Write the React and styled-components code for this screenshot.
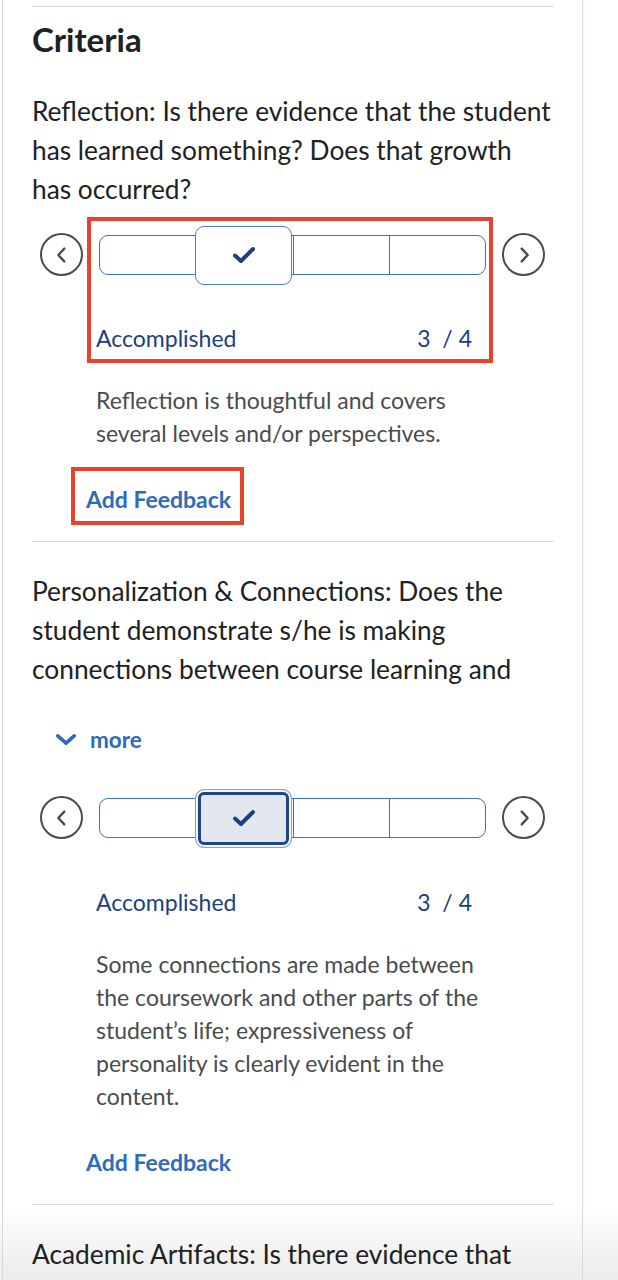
import React from "react";
import styled, { createGlobalStyle } from "styled-components";

const Global = createGlobalStyle`
  html, body { margin: 0; padding: 0; background: #ffffff; }
  body { font-family: Lato, "Noto Sans", sans-serif; color: #202122; }
  * { box-sizing: border-box; }
`;

const Page = styled.div`
  display: flex;
  height: 1280px;
  overflow: hidden;
  padding-left: 2px;
  background: linear-gradient(to bottom, #ffffff 0, #ffffff calc(100% - 74px), #ebebeb 100%);
`;

const Panel = styled.div`
  width: 581px;
  border-left: 1px solid #d3d9e3;
  border-right: 1px solid #d3d9e3;
  padding: 6px 28px 0 29px;
`;

const Divider = styled.div`
  border-top: 1px solid #d6dadf;
`;

const Heading = styled.h2`
  margin: 13px 0 0;
  font-size: 33px;
  line-height: 38px;
  font-weight: 700;
  color: #202122;
`;

const Criterion = styled.section`
  padding: ${(p) => (p.$first ? "34px" : "30px")} 0 ${(p) => (p.$last ? "0" : "27px")};
  border-bottom: ${(p) => (p.$last ? "none" : "1px solid #d6dadf")};
`;

const Question = styled.div`
  position: relative;
  font-size: 26.3px;
  line-height: 39px;
  color: #202122;
  max-height: ${(p) => (p.$clamped ? "131px" : "none")};
  overflow: hidden;
`;

const Fade = styled.div`
  position: absolute;
  left: 0;
  right: 0;
  bottom: 0;
  height: 16px;
  background: linear-gradient(to bottom, rgba(255,255,255,0.75), #ffffff 70%);
`;

const MoreButton = styled.button`
  display: flex;
  align-items: center;
  gap: 13px;
  height: 30px;
  margin: 22px 0 0 23px;
  padding: 0;
  border: none;
  background: none;
  font-family: inherit;
  font-size: 22.5px;
  line-height: 30px;
  font-weight: 700;
  color: #2f6bbd;
  cursor: pointer;
`;

const Wrap = styled.div`
  position: relative;
  margin-top: ${(p) => p.$mt || 0}px;
  margin-left: ${(p) => p.$ml || 0}px;
  width: fit-content;
`;

const SliderRow = styled.div`
  display: flex;
  align-items: center;
  gap: 16px;
  padding-left: 8px;
`;

const RoundButton = styled.button`
  width: 43px;
  height: 43px;
  flex: none;
  border: 2.5px solid #494c4e;
  border-radius: 50%;
  background: #fff;
  display: flex;
  align-items: center;
  justify-content: center;
  padding: 0;
  color: #494c4e;
`;

const Track = styled.div`
  position: relative;
  width: 387px;
  flex: none;
  height: 40px;
  display: grid;
  grid-template-columns: repeat(4, 1fr);
  border: 1px solid #3a72c4;
  border-radius: 9px;
  background: #fff;
`;

const Segment = styled.div`
  border-left: ${(p) => (p.$index === 0 ? "none" : "1px solid #3a72c4")};
`;

const Selected = styled.div`
  position: absolute;
  top: -10px;
  left: ${(p) => p.$left}px;
  width: 97px;
  height: 59px;
  border-radius: 9px;
  display: flex;
  align-items: center;
  justify-content: center;
  background: ${(p) => (p.$focused ? "#e3e8f0" : "#ffffff")};
  border: 1px solid ${(p) => (p.$focused ? "#7fa3d8" : "#4a7fcb")};
  box-shadow: ${(p) => (p.$focused ? "inset 0 0 0 2px #f4f6fa, inset 0 0 0 5px #1f4688" : "none")};
`;

const Highlight = styled.div`
  position: absolute;
  left: ${(p) => p.$l}px;
  top: ${(p) => p.$t}px;
  right: ${(p) => p.$r}px;
  bottom: ${(p) => p.$b}px;
  border: 4px solid #e8432a;
  pointer-events: none;
`;

const LevelRow = styled.div`
  display: flex;
  justify-content: space-between;
  width: 376px;
  margin: ${(p) => p.$mt}px 0 0 64px;
  font-size: 23px;
  line-height: 30px;
  color: #1d3f7f;
`;

const Desc = styled.p`
  margin: 30.5px 0 0 64px;
  width: 400px;
  font-size: 23px;
  line-height: 33px;
  color: #494c4e;
`;

const FeedbackLink = styled.button`
  display: block;
  padding: 0;
  border: none;
  background: none;
  font-family: inherit;
  font-size: 23px;
  line-height: 30px;
  font-weight: 700;
  color: #2f6bbd;
  cursor: pointer;
`;

const ChevronLeft = () => (
  <svg width="22" height="22" viewBox="0 0 24 24" fill="none" stroke="currentColor" strokeWidth="2.6" strokeLinecap="round" strokeLinejoin="round">
    <path d="M14.5 5 L8 12 L14.5 19" />
  </svg>
);

const ChevronRight = () => (
  <svg width="22" height="22" viewBox="0 0 24 24" fill="none" stroke="currentColor" strokeWidth="2.6" strokeLinecap="round" strokeLinejoin="round">
    <path d="M9.5 5 L16 12 L9.5 19" />
  </svg>
);

const Check = () => (
  <svg width="24" height="20" viewBox="0 0 24 20" fill="none" stroke="#1d3f7f" strokeWidth="4" strokeLinecap="round" strokeLinejoin="round">
    <path d="M3 10.5 L9 16 L21 4" />
  </svg>
);

const ChevronDown = () => (
  <svg width="22" height="15" viewBox="0 0 24 16" fill="none" stroke="#2f6bbd" strokeWidth="4" strokeLinecap="round" strokeLinejoin="round">
    <path d="M3 4 L12 12 L21 4" />
  </svg>
);

const Slider = ({ focused }) => (
  <SliderRow>
    <RoundButton aria-label="Previous"><ChevronLeft /></RoundButton>
    <Track>
      {[0, 1, 2, 3].map((i) => <Segment key={i} $index={i} />)}
      <Selected $left={95} $focused={focused}><Check /></Selected>
    </Track>
    <RoundButton aria-label="Next"><ChevronRight /></RoundButton>
  </SliderRow>
);

export default function App() {
  return (
    <>
      <Global />
      <Page>
        <Panel>
          <Divider />
          <Heading>Criteria</Heading>
          <Criterion $first>
            <Question>
              Reflection: Is there evidence that the student has learned something? Does that growth has occurred?
            </Question>
            <Wrap $mt={24}>
              <Slider />
              <LevelRow $mt={47}>
                <span>Accomplished</span>
                <span>3&nbsp;&nbsp;/&nbsp;4</span>
              </LevelRow>
              <Highlight $l={55} $t={-16} $r={52} $b={-10} />
            </Wrap>
            <Desc>Reflection is thoughtful and covers several levels and/or perspectives.</Desc>
            <Wrap $mt={34} $ml={54}>
              <FeedbackLink>Add Feedback</FeedbackLink>
              <Highlight $l={-15} $t={-17} $r={-13} $b={-11} />
            </Wrap>
          </Criterion>
          <Criterion>
            <Question $clamped>
              Personalization &amp; Connections: Does the student demonstrate s/he is making connections between course learning and personal experiences?
              <Fade />
            </Question>
            <MoreButton><ChevronDown />more</MoreButton>
            <Wrap $mt={41.5}>
              <Slider focused />
              <LevelRow $mt={48}>
                <span>Accomplished</span>
                <span>3&nbsp;&nbsp;/&nbsp;4</span>
              </LevelRow>
            </Wrap>
            <Desc>Some connections are made between the coursework and other parts of the student’s life; expressiveness of personality is clearly evident in the content.</Desc>
            <Wrap $mt={34.5} $ml={54}>
              <FeedbackLink>Add Feedback</FeedbackLink>
            </Wrap>
          </Criterion>
          <Criterion $last>
            <Question>
              Academic Artifacts: Is there evidence that the student has included artifacts?
            </Question>
          </Criterion>
        </Panel>
      </Page>
    </>
  );
}
